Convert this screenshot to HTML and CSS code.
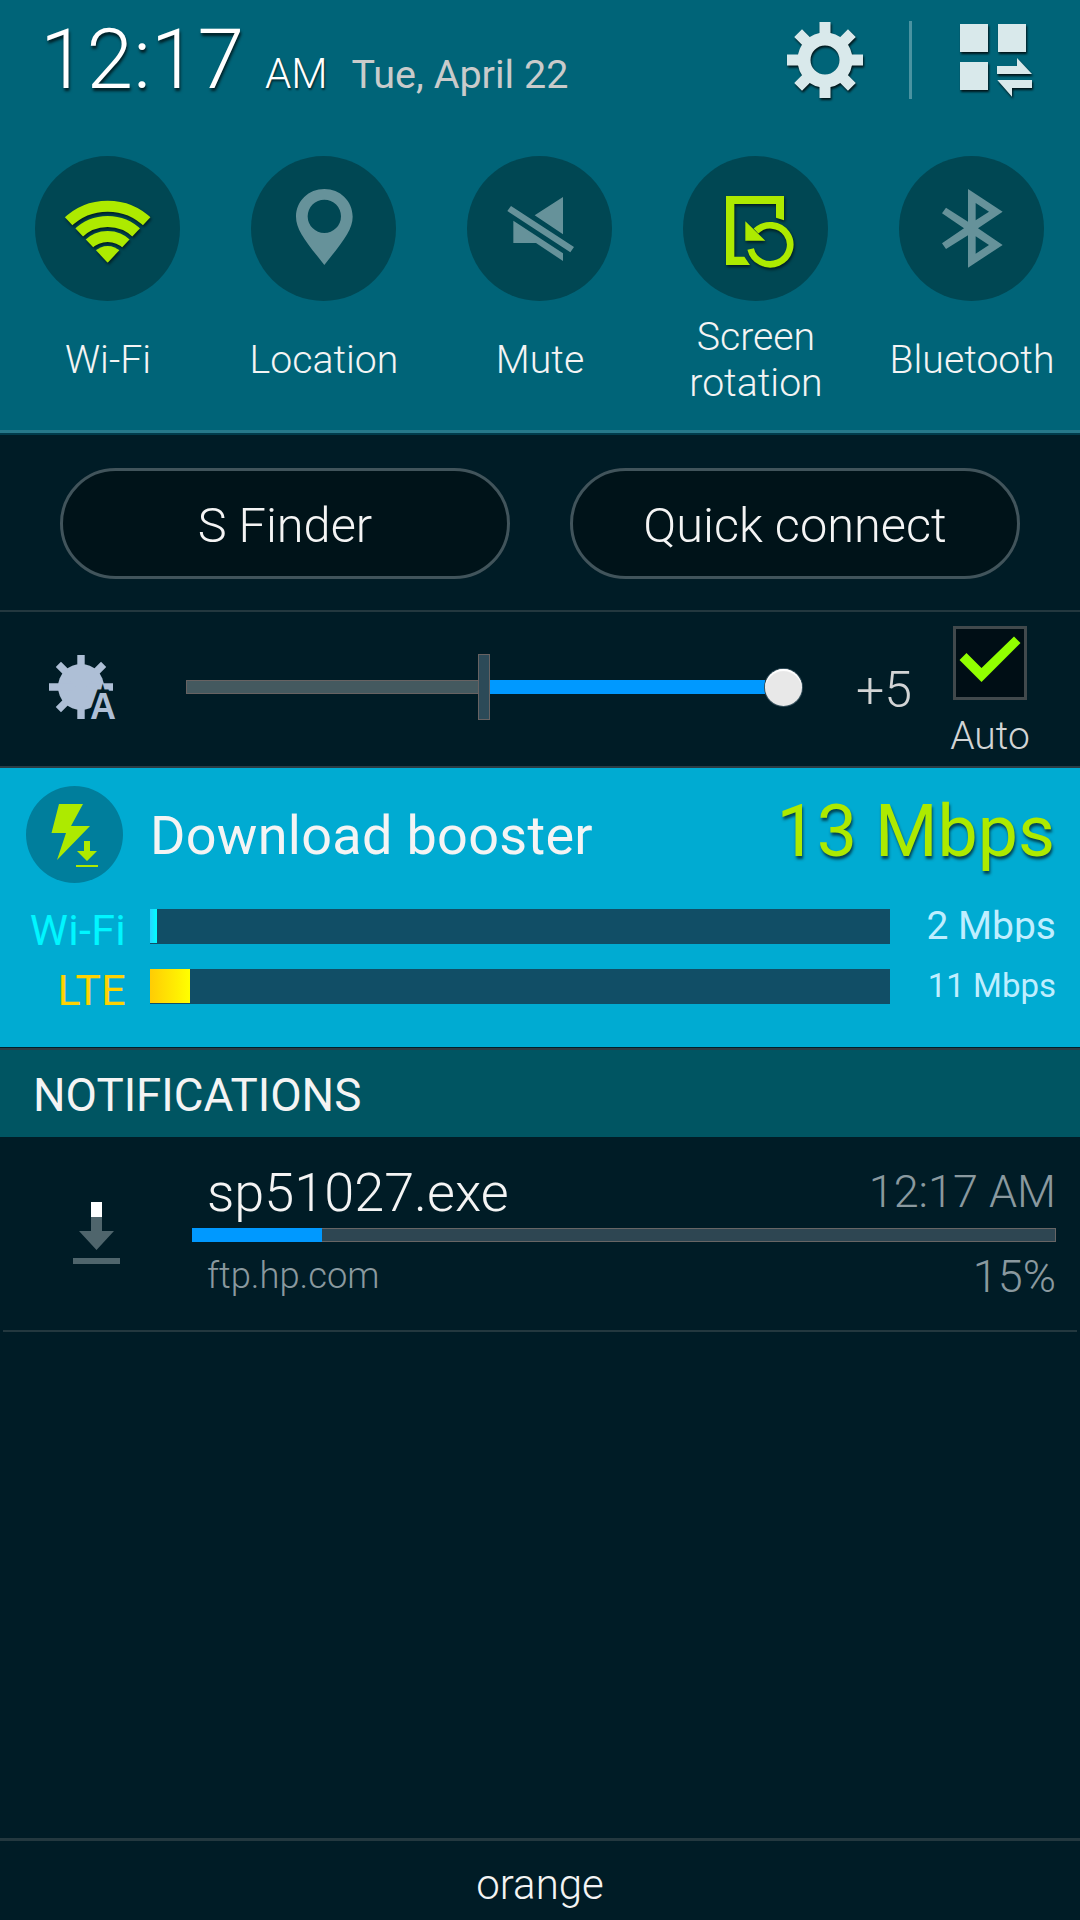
FILE: index.html
```
<!DOCTYPE html>
<html lang="en-US">
    <head>
        <meta charset="utf-8">
        <title>Notification panel</title>
        <meta name="viewport" content="width=device-width, initial-scale=1">
        <link rel="stylesheet" href="styles.css">
    </head>

<body>
    <div class="top">
        <header class="status">
            <span class="time">12:17</span>
            <span class="ampm">AM</span>
            <span class="date">Tue, April 22</span>
            <div class="actions">
                <svg class="gear" viewBox="-38 -38 76 76">
                    <circle r="21" fill="none" stroke="#d9e9eb" stroke-width="13"/>
                    <g fill="#d9e9eb">
                        <path id="teeth" d="M-5.500-38h11v13h-11zM-5.500 25h11v13h-11zM-38-5.500h13v11h-13zM25-5.500h13v11h-13z"/>
                        <use href="#teeth" transform="rotate(45)"/>
                    </g>
                </svg>
                <span class="separator"></span>
                <svg class="grid-icon" viewBox="0 0 72 73">
                    <path fill="#d9e9eb" d="M0 0h28v28H0zM38 0h28v28H38zM0 38h28v28H0zM37 42h20v-8l15 16H37zM37.300 56H72v8H52v8.700z"/>
                </svg>
            </div>
        </header>

        <div class="toggles">
            <div class="toggle">
                <svg class="circle on" viewBox="0 0 435 435">
                    <clipPath id="wedge"><path d="M218 320L18 107.500H418z"/></clipPath>
                    <g class="glyph"><g clip-path="url(#wedge)">
                        <circle cx="218" cy="325" r="55" fill="#adea00"/>
                        <g fill="none" stroke="#adea00" stroke-width="33">
                            <circle cx="218" cy="325" r="83.500"/>
                            <circle cx="218" cy="325" r="128.500"/>
                            <circle cx="218" cy="325" r="174.500"/>
                        </g>
                    </g></g>
                </svg>
                <div class="label">Wi-Fi</div>
            </div>
            <div class="toggle">
                <svg class="circle" viewBox="0 0 435 435">
                    <path fill="#66929a" fill-rule="evenodd" d="M220 99C173 99 135 135 135 182C135 222 166 258 220 327C274 258 305 222 305 182C305 135 267 99 220 99zM220 131a50 50 0 1 1 0 100a50 50 0 1 1 0-100z"/>
                </svg>
                <div class="label">Location</div>
            </div>
            <div class="toggle">
                <svg class="circle" viewBox="0 0 435 435">
                    <path fill="#66929a" d="M203 178L288 123V235zM132 150L321 273L310 289L121 165zM139 194L288 292V315L207 261H139z"/>
                </svg>
                <div class="label">Mute</div>
            </div>
            <div class="toggle">
                <svg class="circle on" viewBox="0 0 435 435">
                    <g class="glyph">
                        <path fill="#adea00" d="M129 120H303V193L279 185V144H154V302H184L201 327H129zM187 196L247 254H187z"/>
                        <path fill="none" stroke="#adea00" stroke-width="20" d="M203 279A60 58.500 0 1 0 219 225"/>
                    </g>
                </svg>
                <div class="label">Screen<br>rotation</div>
            </div>
            <div class="toggle">
                <svg class="circle" viewBox="0 0 435 435">
                    <path fill="#66929a" fill-rule="evenodd" d="M207 99L311 167L237 217L311 267L207 335V238L141 279L129 262L195 217L129 172L141 155L207 197zM230 141V193L270 167zM230 241V293L270 267z"/>
                </svg>
                <div class="label">Bluetooth</div>
            </div>
        </div>
    </div>

    <div class="shortcuts">
        <div class="pill">S Finder</div>
        <div class="pill">Quick connect</div>
    </div>

    <div class="brightness">
        <svg class="sun" viewBox="0 0 68 74">
            <g fill="#aebfd6" transform="translate(32 32)">
                <circle r="23"/>
                <path id="rays" d="M-3.700-32h7.400v64h-7.400zM-32-3.700h64v7.400h-64z"/>
                <use href="#rays" transform="rotate(45)"/>
            </g>
            <text class="sun-a" x="54" y="64" text-anchor="middle">A</text>
        </svg>
        <div class="slider">
            <div class="slider-left"></div>
            <div class="slider-mid"></div>
            <div class="slider-right"></div>
            <div class="knob"></div>
        </div>
        <div class="level">+5</div>
        <div class="auto">
            <svg class="check" viewBox="0 0 74 74">
                <rect x="1.500" y="1.500" width="71" height="71" fill="#000e15" stroke="#41494c" stroke-width="3"/>
                <path fill="#91ff00" d="M6.500 34L13.500 27L28.500 42L61 10.500L67.500 17L28.500 56z"/>
            </svg>
            <div class="auto-text">Auto</div>
        </div>
    </div>

    <div class="booster">
        <div class="booster-head">
            <svg class="bolt" viewBox="0 0 97 97">
                <circle cx="48.500" cy="48.500" r="48.500" fill="#007e9c"/>
                <path fill="#adea00" d="M33 18H57L45 40H64L31 74L40 47H25.500zM58 55h6v10h7L61 75L51 65h7zM50 79h22v2H50z"/>
            </svg>
            <div class="booster-title">Download booster</div>
            <div class="speed">13 Mbps</div>
        </div>
        <div class="net">
            <div class="net-name wifi">Wi-Fi</div>
            <div class="bar"><div class="bar-wifi" style="width: 7px"></div></div>
            <div class="rate">2 Mbps</div>
        </div>
        <div class="net">
            <div class="net-name lte">LTE</div>
            <div class="bar"><div class="bar-lte" style="width: 40px"></div></div>
            <div class="rate small">11 Mbps</div>
        </div>
    </div>

    <div class="section">NOTIFICATIONS</div>

    <div class="item">
        <svg class="download" viewBox="0 0 47 62">
            <path fill="#4f656c" d="M18 15h11v14h12L23.500 48L6 29h12zM0 56h47v6H0z"/>
            <path fill="#fff" d="M18 0h11v15H18z"/>
        </svg>
        <div class="item-body">
            <div class="line first"><span class="file">sp51027.exe</span><span class="when">12:17 AM</span></div>
            <div class="progress"><div class="progress-done" style="width: 130px"></div></div>
            <div class="line second"><span class="host">ftp.hp.com</span><span class="percent">15%</span></div>
        </div>
    </div>

    <footer class="carrier">orange</footer>
</body>
</html>
```
FILE: styles.css
```
* {
    box-sizing: border-box;
}

body {
    margin: 0;
    width: 1080px;
    height: 1920px;
    display: flex;
    flex-direction: column;
    overflow: hidden;
    background: #001c26;
    color: #f4f4f4;
    font-family: Roboto, "Liberation Sans", sans-serif;
    font-weight: 300;
    white-space: nowrap;
}

svg {
    display: block;
    flex: none;
}

/* clock, date and toggles */
.top {
    height: 435px;
    background: #006478;
    border-bottom: 2px solid #003b4b;
    box-shadow: inset 0 -3px #26788a;
}

.status {
    height: 156px;
    padding: 10px 48px 0 40px;
    display: flex;
    align-items: baseline;
}

.time {
    font-size: 84px;
    line-height: 100px;
    color: #fff;
    text-shadow: 1px 3px 3px rgba(0, 0, 0, .7);
}

.ampm {
    margin-left: 21px;
    font-size: 42px;
    color: #fff;
    text-shadow: 1px 2px 2px rgba(0, 0, 0, .6);
}

.date {
    margin-left: 24px;
    font-size: 39.5px;
    font-weight: 400;
    color: #c9cbcb;
}

.actions {
    margin-left: auto;
    align-self: flex-start;
    display: flex;
    padding-top: 11px;
}

.gear,
.grid-icon {
    filter: drop-shadow(1px 2px 1px rgba(0, 0, 0, .8));
}

.gear {
    width: 76px;
    height: 76px;
    margin-top: 1px;
}

.separator {
    width: 3px;
    height: 78px;
    margin: 0 48px 0 46px;
    background: #4a93a1;
}

.grid-icon {
    width: 72px;
    height: 73px;
    margin-top: 3px;
}

.toggles {
    display: grid;
    grid-template-columns: repeat(5, 216px);
}

.circle {
    width: 145px;
    height: 145px;
    margin-left: 35px;
    border-radius: 50%;
    background: #004753;
}

.glyph {
    filter: drop-shadow(3px 6px 4px rgba(0, 0, 0, .6));
}

.label {
    height: 92px;
    margin-top: 13px;
    display: flex;
    align-items: center;
    justify-content: center;
    text-align: center;
    font-size: 39.2px;
    line-height: 46px;
}

/* S Finder / Quick connect */
.shortcuts {
    height: 177px;
    padding: 33px 60px 0;
    display: flex;
    gap: 60px;
    border-bottom: 2px solid #23383f;
}

.pill {
    flex: 1;
    height: 111px;
    border: 3px solid #41545b;
    border-radius: 56px;
    background: #001319;
    font-size: 48.7px;
    line-height: 109px;
    text-align: center;
}

/* brightness */
.brightness {
    height: 156px;
    padding-left: 49px;
    display: flex;
    border-bottom: 2px solid #2a3c44;
    color: #d2d4d5;
}

.sun {
    width: 68px;
    height: 74px;
    margin-top: 43px;
}

.sun-a {
    font: bold 36px "Liberation Sans", sans-serif;
    fill: #aebfd6;
    stroke: #001c26;
    stroke-width: 7px;
    paint-order: stroke;
}

.slider {
    height: 66px;
    margin: 42px 0 0 69px;
    display: flex;
    align-items: center;
}

.slider-left {
    width: 292px;
    height: 14px;
    background: #44595f;
    border: 1px solid #676262;
    border-right: 0;
}

.slider-mid {
    width: 12px;
    height: 66px;
    background: #2c4a58;
    border: 1px solid #676262;
}

.slider-right {
    width: 275px;
    height: 14px;
    background: #0099ff;
}

.knob {
    width: 37px;
    height: 37px;
    border-radius: 50%;
    background: #e8e8e8;
    box-shadow: 0 0 0 1px #35505c, inset 0 2px 1px #fff;
}

.level {
    width: 111px;
    margin-top: 48px;
    padding-left: 54px;
    font-size: 50px;
    line-height: 60px;
}

.auto {
    width: 76px;
    margin-left: 40px;
    padding-top: 14px;
}

.check {
    width: 74px;
    height: 74px;
}

.auto-text {
    width: 74px;
    margin-top: 12px;
    display: flex;
    justify-content: center;
    font-size: 39px;
    line-height: 48px;
}

/* download booster */
.booster {
    height: 280px;
    padding: 18px 25px 0 26px;
    background: #00abd2;
    border-bottom: 1px solid #00202b;
    font-weight: 400;
}

.booster-head {
    height: 123px;
    display: flex;
}

.bolt {
    width: 97px;
    height: 97px;
}

.booster-title {
    margin-left: 27px;
    font-size: 54px;
    letter-spacing: .3px;
    line-height: 100px;
}

.speed {
    margin-left: auto;
    font-size: 71.7px;
    line-height: 92px;
    color: #adea00;
    text-shadow: 1px 3px 3px rgba(0, 40, 50, .8);
}

.net {
    height: 60px;
    display: flex;
}

.net-name {
    width: 100px;
    font-size: 43px;
    letter-spacing: .3px;
    line-height: 43px;
    text-align: right;
}

.wifi {
    color: #00f6ff;
}

.lte {
    color: #ffd200;
}

.bar {
    width: 740px;
    height: 35px;
    margin-left: 24px;
    background: #114e66;
}

.bar-wifi {
    height: 34px;
    background: linear-gradient(90deg, #26d4ff, #00ffff);
}

.bar-lte {
    height: 34px;
    background: linear-gradient(90deg, #ffcc05, #ffff00);
}

/* the rate box is shorter than its text, so the descender is cut */
.rate {
    height: 33px;
    margin: 0 -1px 0 auto;
    overflow: hidden;
    font-size: 39px;
    line-height: 34px;
    color: #bfeeff;
}

.rate.small {
    height: 38px;
    overflow: visible;
    font-size: 33px;
}

/* notifications */
.section {
    height: 89px;
    padding-left: 33px;
    border-top: 2px solid #2a3c44;
    background: #005562;
    font-size: 45.7px;
    font-weight: 400;
    line-height: 91px;
}

.item {
    height: 195px;
    margin: 0 3px;
    padding: 0 21px 0 70px;
    display: flex;
    border-bottom: 2px solid #23383f;
}

.download {
    width: 47px;
    height: 62px;
    margin-top: 65px;
}

.item-body {
    flex: 1;
    margin-left: 72px;
}

.line {
    display: flex;
    justify-content: space-between;
    padding-left: 15px;
    color: #8a999f;
}

.first {
    height: 91px;
}

.file {
    font-size: 54px;
    line-height: 111px;
    color: #f4f4f4;
}

.when {
    font-size: 45px;
    line-height: 109px;
}

.progress {
    height: 14px;
    background: #2e4652;
    box-shadow: inset 0 0 0 1px #676565;
}

.progress-done {
    height: 14px;
    background: #0099ff;
}

.host {
    font-size: 36.3px;
    line-height: 68px;
}

.percent {
    font-size: 45px;
    line-height: 70px;
}

.carrier {
    height: 82px;
    margin-top: auto;
    border-top: 3px solid #23383f;
    font-size: 42px;
    line-height: 88px;
    text-align: center;
}
```
